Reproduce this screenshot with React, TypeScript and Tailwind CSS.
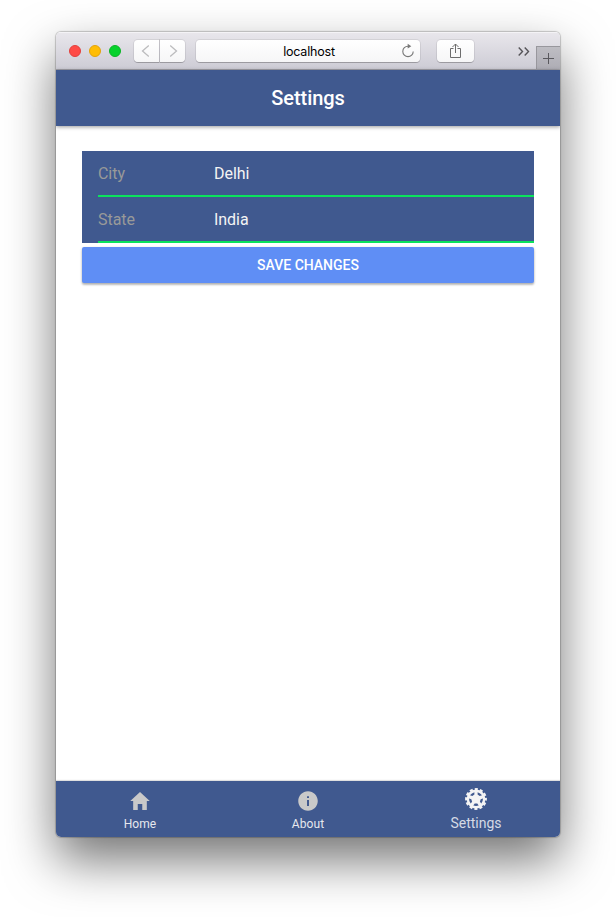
import type { ReactNode } from 'react';
import { IoMdHome, IoMdInformationCircle } from 'react-icons/io';

const toolButton =
  'flex items-center justify-center h-[22px] bg-gradient-to-b from-white to-[#f6f6f7] shadow-[0_0_0_1px_rgba(0,0,0,0.07),0_1px_0_rgba(0,0,0,0.2)]';

function Toolbar() {
  return (
    <div className="flex h-[38px] shrink-0 border-b border-[#a2a1a8] bg-gradient-to-b from-[#e9e7ec] to-[#cdccd5] shadow-[inset_0_1px_0_#f4f3f6]">
      <div className="flex items-center gap-2 pl-[13px]">
        <span className="size-3 rounded-full border border-[#e2403d] bg-[#ff4b47]" />
        <span className="size-3 rounded-full border border-[#e3a30a] bg-[#ffbd05]" />
        <span className="size-3 rounded-full border border-[#0bb426] bg-[#06d22c]" />
      </div>
      <div className="ml-[13px] mt-2 flex gap-px">
        <div className={`${toolButton} w-[25px] rounded-l-[4px]`}>
          <svg width="25" height="22" viewBox="0 0 25 22" fill="none" stroke="#bcbcbe" strokeWidth="1.3">
            <path d="M14.8 5.5 8.500 11l6.300 5.500" />
          </svg>
        </div>
        <div className={`${toolButton} w-[25px] rounded-r-[4px]`}>
          <svg width="25" height="22" viewBox="0 0 25 22" fill="none" stroke="#bcbcbe" strokeWidth="1.3">
            <path d="M10.200 5.500 16.500 11 10.200 16.500" />
          </svg>
        </div>
      </div>
      <div className={`${toolButton} relative ml-[11px] mt-2 w-[224px] rounded-[4px]`}>
        <span className="pl-0.5 pt-px font-['Inter',sans-serif] text-[12.500px] leading-4 tracking-[-0.2px] text-black">
          localhost
        </span>
        <svg className="absolute right-[5px] top-[3px]" width="14" height="15" viewBox="0 0 14 15" fill="none" stroke="#777" strokeWidth="1.100">
          <path d="M7 3.200A5.200 5.200 0 1 0 12.200 8.400" />
          <path d="M6.700.8 10.300 3.200 6.700 5.500z" fill="#777" stroke="none" />
        </svg>
      </div>
      <div className={`${toolButton} ml-[17px] mt-2 w-[37px] rounded-[4px]`}>
        <svg width="13" height="16" viewBox="0 0 13 16" fill="none" stroke="#6d6d6d" strokeWidth="1">
          <path d="M4.500 5.500H1.500v9h10v-9h-3M6.500 10V1M3.500 4l3-3 3 3" />
        </svg>
      </div>
      <svg className="ml-[43px] mt-[14px]" width="14" height="11" viewBox="0 0 14 11" fill="none" stroke="#555458" strokeWidth="1.400">
        <path d="M1.700 1.500 5.500 5.500 1.700 9.500M7.700 1.500l3.800 4-3.800 4" />
      </svg>
      <div className="ml-auto mt-[14px] flex w-6 items-center justify-center border-l border-t border-[#98979d] bg-gradient-to-b from-[#bebdc3] to-[#aeadb5]">
        <svg width="11" height="11" viewBox="0 0 11 11" stroke="#59585d" strokeWidth="1">
          <path d="M5.500 0v11M0 5.500h11" />
        </svg>
      </div>
    </div>
  );
}

function Field({ label, value }: { label: string; value: string }) {
  return (
    <div className="pl-4">
      <div className="flex h-[46px] items-center border-b-2 border-[#0be35c] pt-px text-base leading-5 tracking-[-0.05px]">
        <span className="w-[116px] text-[#999]">{label}</span>
        <span className="text-[#f4f4f4]">{value}</span>
      </div>
    </div>
  );
}

const gearSlots = [0, 72, 144, 216, 288];

function GearIcon() {
  return (
    <svg width="24" height="24" viewBox="-12 -12 24 24" fill="none" stroke="#f4f4f4">
      <circle r="9.800" strokeWidth="2.200" strokeDasharray="3.100 2.031" strokeDashoffset="1.550" />
      <circle r="4.700" strokeWidth="9.400" />
      {gearSlots.map((angle) => (
        <path
          key={angle}
          transform={`rotate(${angle})`}
          d="M-2.700 6.500Q0 7.300 2.700 6.500L1.300 4.500H-1.300z"
          fill="#40598f"
          stroke="none"
        />
      ))}
    </svg>
  );
}

function Tab({ icon, label }: { icon: ReactNode; label: string }) {
  return (
    <div className="flex flex-1 flex-col items-center pt-2 text-[#c9c9c9]">
      {icon}
      <span className="mt-[3px] text-xs leading-4 tracking-[0.1px] text-[#e6e8ee]">{label}</span>
    </div>
  );
}

export default function App() {
  return (
    <div className="h-[917px] w-[616px] overflow-hidden bg-white pl-14 pt-8 font-['Roboto',sans-serif]">
      <div className="flex h-[805px] w-[504px] flex-col overflow-hidden rounded-[5px] bg-white shadow-[0_0_1px_1px_rgba(0,0,0,0.2),0_23px_50px_rgba(0,0,0,0.55)]">
        <Toolbar />
        <header className="z-10 flex h-14 shrink-0 items-center justify-center bg-[#40598f] text-xl font-medium tracking-[-0.05px] text-white shadow-[0_1px_4px_rgba(0,0,0,0.4)]">
          Settings
        </header>
        <main className="flex-1 px-[26px] pt-[25px]">
          <div className="bg-[#40598f]">
            <Field label="City" value="Delhi" />
            <Field label="State" value="India" />
          </div>
          <button className="mt-1 flex h-9 w-full items-center justify-center rounded-[2px] bg-[#5f8ef5] text-sm font-medium text-white shadow-[0_2px_2px_rgba(0,0,0,0.18),0_1px_3px_rgba(0,0,0,0.2)]">
            SAVE CHANGES
          </button>
        </main>
        <footer className="flex h-14 shrink-0 bg-[#40598f] shadow-[0_-1px_1px_rgba(0,0,0,0.12)]">
          <Tab icon={<IoMdHome size={24} />} label="Home" />
          <Tab icon={<IoMdInformationCircle size={24} />} label="About" />
          <div className="flex flex-1 flex-col items-center pt-1.5">
            <GearIcon />
            <span className="mt-1 text-[14px] leading-4 text-[#d5dae5]">Settings</span>
          </div>
        </footer>
      </div>
    </div>
  );
}
